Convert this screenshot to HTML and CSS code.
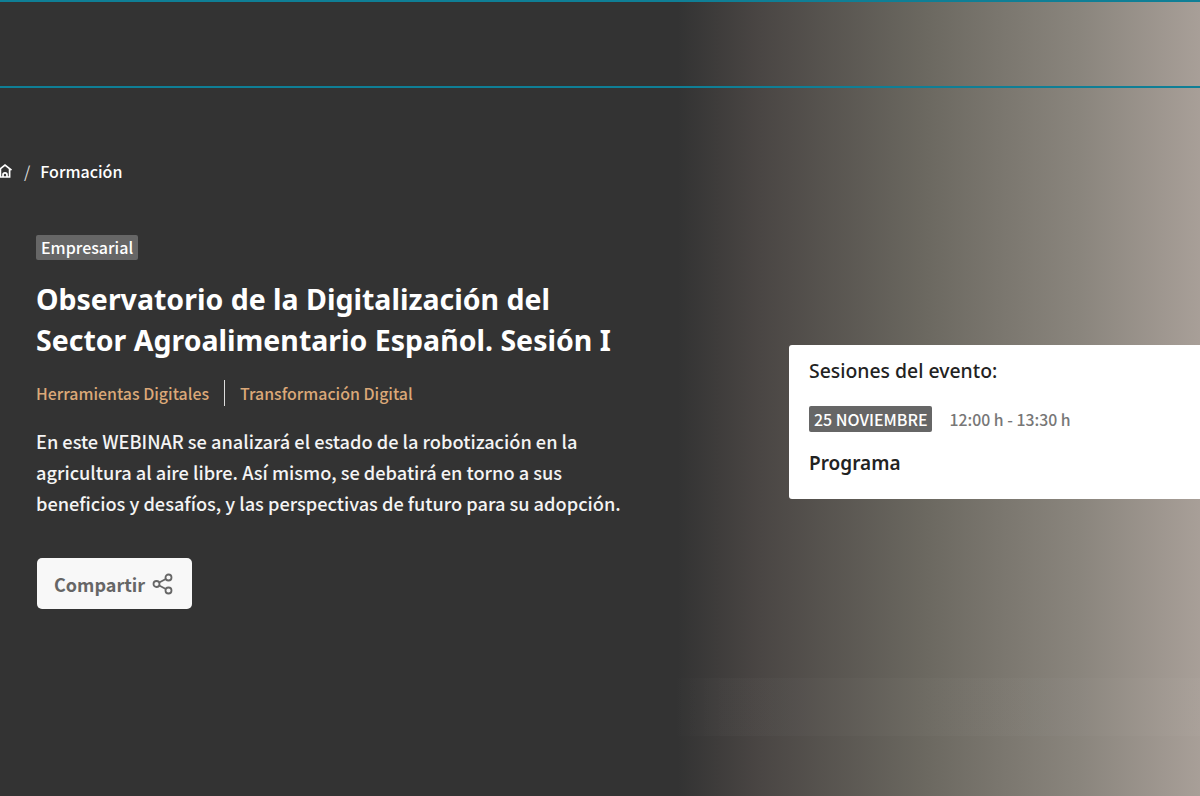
FILE: index.html
```html
<!DOCTYPE html>
<html lang="es">
<head>
	<meta charset="UTF-8">
	<title>Observatorio de la Digitalización</title>
	<link rel="stylesheet" href="styles.css">
</head>
<body>

<div class="topbar"></div>
<div class="band"></div>

<div class="hero">
	<nav class="crumbs">
		<svg class="home" viewBox="0 0 16 16" width="16" height="16" fill="none" stroke="currentColor" stroke-width="1.7">
			<path d="M1.5 7.2 8 2l6.5 5.2"/>
			<path d="M3.4 6v8h9.2V6"/>
			<path d="M6 14v-2.2a2 2 0 0 1 4 0V14"/>
		</svg>
		<span class="sep">/</span>
		<span class="current">Formación</span>
	</nav>

	<div class="columns">
		<div class="info">
			<span class="tag">Empresarial</span>
			<h1>Observatorio de la Digitalización del<br>Sector Agroalimentario Español. Sesión I</h1>
			<div class="topics">
				<span>Herramientas Digitales</span>
				<span class="divider"></span>
				<span>Transformación Digital</span>
			</div>
			<p class="intro">En este WEBINAR se analizará el estado de la robotización en la agricultura al aire libre. Así mismo, se debatirá en torno a sus beneficios y desafíos, y las perspectivas de futuro para su adopción.</p>
			<button class="share">Compartir
				<svg viewBox="0 0 22 22" width="22" height="22" fill="none" stroke="currentColor" stroke-width="1.8">
					<circle cx="16.5" cy="4.5" r="3"/>
					<circle cx="4.5" cy="11" r="3"/>
					<circle cx="16.5" cy="17.5" r="3"/>
					<path d="M7.2 9.5 13.8 6M7.2 12.5l6.6 3.5"/>
				</svg>
			</button>
		</div>

		<aside class="sessions">
			<h2>Sesiones del evento:</h2>
			<div class="session-row">
				<span class="date">25 NOVIEMBRE</span>
				<span class="time">12:00 h - 13:30 h</span>
			</div>
			<a class="program">Programa</a>
		</aside>
	</div>
</div>

</body>
</html>
```
FILE: styles.css
```css
html, body {
	margin: 0;
	padding: 0;
	height: 100%;
	overflow: hidden;
}

body {
	font-family: "Noto Sans CJK JP", "Noto Sans", sans-serif;
	color: #fff;
	background: linear-gradient(90deg, #333 0, #333 56.5%, #494543 63%, #6b6860 77%, #8a857d 90%, #a89f98 100%);
}

.topbar {
	box-sizing: border-box;
	height: 88px;
	border-top: 2px solid #0f7f96;
	border-bottom: 2px solid #0f7f96;
}

/* faint lighter strip low in the gradient */
.band {
	position: absolute;
	top: 678px;
	right: 0;
	left: 670px;
	height: 58px;
	background: linear-gradient(90deg, rgba(255, 255, 255, 0), rgba(255, 255, 255, .02) 10%);
}

.hero {
	position: relative;
	padding: 71px 0 0 36px;
}

.crumbs {
	display: flex;
	align-items: center;
	height: 24px;
	margin-left: -39px;
	font-size: 16px;
	font-weight: 500;
}

.home {
	margin-right: 4px;
}

.sep {
	margin: 0 10px 0 7px;
	color: #ddd;
	font-weight: 400;
}

.columns {
	display: flex;
	align-items: flex-start;
	margin-top: 52px;
}

.info {
	width: 600px;
	flex: none;
}

.tag {
	display: inline-block;
	padding: 0 5px;
	background: #666;
	border-radius: 2px;
	font-size: 16px;
	font-weight: 500;
	line-height: 25px;
}

h1 {
	margin: 19px 0 0;
	font-family: "Noto Sans", sans-serif;
	font-size: 28.5px;
	font-weight: 700;
	line-height: 41px;
	white-space: nowrap;
}

.topics {
	display: flex;
	align-items: center;
	height: 26px;
	margin-top: 19px;
	color: #dba878;
	font-size: 15.9px;
	font-weight: 500;
}

.divider {
	width: 1px;
	height: 26px;
	margin: 0 15px;
	background: #ddd;
}

.intro {
	width: 596px;
	margin: 20px 0 0;
	font-size: 18.2px;
	font-weight: 500;
	line-height: 31px;
	color: #f4f4f4;
}

.share {
	display: flex;
	align-items: center;
	gap: 7px;
	width: 155px;
	height: 51px;
	margin: 39px 0 0 1px;
	padding: 0 0 0 17px;
	border: 0;
	border-radius: 5px;
	background: #f8f8f8;
	color: #666;
	font-family: inherit;
	font-size: 18px;
	font-weight: 700;
}

.sessions {
	flex: 1;
	box-sizing: border-box;
	height: 154px;
	margin: 110px 0 0 153px;
	padding: 13px 20px;
	background: #fff;
	border-radius: 3px 0 0 3px;
	color: #222;
}

h2 {
	margin: 0;
	font-family: "Noto Sans", sans-serif;
	font-size: 19.4px;
	font-weight: 500;
	line-height: 25px;
}

.session-row {
	display: flex;
	align-items: center;
	gap: 18px;
	margin-top: 23px;
}

.date {
	padding: 0 4px 0 5px;
	background: #666;
	border-radius: 2px;
	color: #fff;
	font-size: 16px;
	font-weight: 500;
	line-height: 26px;
}

.time {
	color: #777;
	font-size: 15.8px;
	font-weight: 500;
}

.program {
	display: block;
	margin-top: 18px;
	font-family: "Noto Sans", sans-serif;
	font-size: 19px;
	font-weight: 600;
	line-height: 27px;
}
```
